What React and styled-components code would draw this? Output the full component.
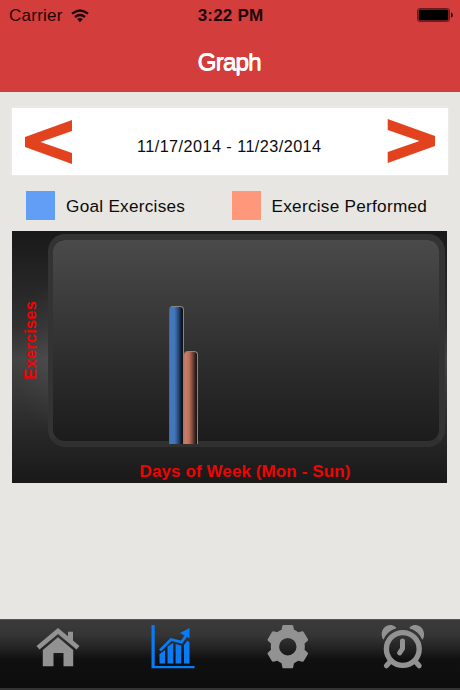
import React from "react";
import styled, { createGlobalStyle } from "styled-components";

const GlobalStyle = createGlobalStyle`
  * { box-sizing: border-box; }
  body { margin: 0; background: #e8e6e2; }
`;

const Screen = styled.div`
  display: flex;
  flex-direction: column;
  width: 460px;
  height: 690px;
  overflow: hidden;
  background: #e8e6e2;
  color: #0b0b0b;
  font-family: "Liberation Sans", Arial, sans-serif;
`;

const Header = styled.header`
  flex: none;
  height: 92px;
  background: #d33d3c;
`;

const StatusBar = styled.div`
  display: grid;
  grid-template-columns: 1fr auto 1fr;
  align-items: center;
  height: 30px;
  padding: 0 7px 0 9px;
  color: #1c0505;
  font-size: 17px;
  line-height: 20px;
`;

const Carrier = styled.div`
  display: flex;
  align-items: center;
  gap: 8px;
  padding-top: 1px;
  letter-spacing: 0.25px;
`;

const Clock = styled.div`
  padding: 1px 1px 0 0;
  font-weight: bold;
  letter-spacing: 0.2px;
`;

const BatterySlot = styled.div`
  display: flex;
  justify-content: flex-end;
`;

const Title = styled.h1`
  margin: 0;
  padding: 16px 2px 0 0;
  text-align: center;
  color: #fff;
  font-size: 24.5px;
  line-height: 31px;
  font-weight: normal;
  letter-spacing: -1px;
  text-shadow: 0.4px 0 0 #fff, 0 0.6px 0 #fff;
`;

const Content = styled.main`
  flex: 1;
  padding: 16px 12px 0;
`;

const DateCard = styled.section`
  display: flex;
  justify-content: space-between;
  height: 67px;
  padding: 12px 13px 0;
  background: #fff;
  box-shadow: 0 0 2px #f4f3f1;
`;

const ArrowButton = styled.button`
  display: block;
  width: 48px;
  height: 45px;
  margin-top: ${(p) => p.$shift}px;
  padding: 0;
  border: 0;
  background: none;
  svg { display: block; }
`;

const DateRange = styled.div`
  padding: 16px 1.5px 0 0;
  font-size: 16.2px;
  line-height: 20px;
  letter-spacing: 0.46px;
  white-space: nowrap;
`;

const Legend = styled.div`
  display: grid;
  grid-template-columns: 205.5px 1fr;
  height: 56px;
  padding: 16px 0 0 14px;
`;

const LegendItem = styled.div`
  display: flex;
  align-items: center;
  gap: 11px;
  height: 29px;
  font-size: 17.2px;
  line-height: 20px;
  letter-spacing: 0.26px;
  white-space: nowrap;
`;

const LegendText = styled.span`
  padding-top: 0.5px;
`;

const Swatch = styled.span`
  width: 29px;
  height: 29px;
  background: ${(p) => p.$color};
`;

const Chart = styled.section`
  display: grid;
  grid-template-columns: 36px 397px;
  grid-template-rows: 216px 1fr;
  width: 435px;
  height: 252px;
  background:
    radial-gradient(ellipse 30px 75px at 36px 125px, rgba(105, 105, 105, 0.2), transparent),
    linear-gradient(#191919 0, #242424 18%, #303030 38%, #434343 51%, #3a3a3a 61%, #282828 80%, #191919 100%);
  color: #ed0505;
  font-size: 17px;
  font-weight: bold;
`;

const YAxisLabel = styled.div`
  justify-self: center;
  align-self: center;
  margin: 3px 1px 0 0;
  writing-mode: vertical-rl;
  transform: rotate(180deg);
  font-size: 16.5px;
  line-height: 20px;
  letter-spacing: 0.15px;
`;

const Plot = styled.div`
  display: flex;
  align-items: flex-end;
  margin-top: 3px;
  padding-left: 116px;
  border: 6px solid #333;
  border-left-width: 5px;
  border-bottom-color: #303030;
  border-radius: 17px;
  background: linear-gradient(#4a4a4a, #3c3c3c 30%, #2c2c2c 63%, #1c1c1c) padding-box;
`;

const Bar = styled.div`
  width: ${(p) => p.$width}px;
  margin-bottom: -3px;
  border: 1px solid #858985;
  border-bottom: 0;
  border-left-color: ${(p) => p.$edge};
  border-radius: 4px 4px 0 0;
  background: ${(p) => p.$fill};
`;

const XAxisLabel = styled.div`
  grid-column: 1 / -1;
  padding: 15px 0 0 33px;
  text-align: center;
  line-height: 20px;
  letter-spacing: 0.1px;
`;

const TabBar = styled.nav`
  display: grid;
  grid-template-columns: repeat(4, 115px);
  flex: none;
  height: 71px;
  padding-top: 5px;
  border-top: 1px solid #55554f;
  border-bottom: 2px solid #333;
  background: linear-gradient(#3b3b3b 0, #353535 22%, #222 42%, #101010 58%, #0d0d0d 100%);
`;

const Tab = styled.button`
  display: flex;
  justify-content: center;
  height: 46px;
  padding: 0;
  border: 0;
  background: none;
  color: ${(p) => (p.$active ? "#087bf5" : "#929292")};
  svg { display: block; flex: none; }
`;

const WifiIcon = () => (
  <svg width="18" height="14" viewBox="0 0 18 14" fill="none" stroke="currentColor" strokeWidth="2.3">
    <path d="M1 4.7Q9-1.8 17 4.7" />
    <path d="M4 8Q9 4 14 8" />
    <path d="M6.2 10Q9 7.8 11.8 10L9 13.2Z" fill="currentColor" stroke="none" />
  </svg>
);

const BatteryIcon = () => (
  <svg width="36" height="14" viewBox="0 0 36 14">
    <rect x=".5" y=".5" width="32" height="13" rx="2" fill="none" stroke="#6b1c1b" />
    <rect x="1.6" y="1.6" width="29.8" height="10.8" rx="1" fill="#030000" />
    <path d="M34 4.5q2 .5 2 2.5t-2 2.5z" fill="#260707" />
  </svg>
);

const HomeIcon = () => (
  <svg width="46" height="46" viewBox="0 0 46 46" fill="currentColor">
    <path d="M1.5 21L23 3L33 11.3V6.7H38V15.5L44.5 21L41.5 24.5L23 9L4.5 24.5Z" />
    <path d="M7.8 25L23 12.2L38.2 25V41.2H28.5V28H18.5V41.2H7.8Z" />
  </svg>
);

const GraphIcon = () => (
  <svg width="46" height="46" viewBox="0 0 46 46" fill="currentColor">
    <path d="M1.5 0H4.7V41H44.5V43.3H1.5Z" />
    <path d="M9.5 29L15 25V38.5H9.5ZM17.5 21.5L23.2 17.7V38.5H17.5ZM25.6 19L31.2 20.5V38.5H25.6ZM34 20L37.5 15.5L39.5 17.5V38.5H34Z" />
    <path d="M10 25.5L21 14.5L31.5 17.2L37 9.5" fill="none" stroke="currentColor" strokeWidth="2.8" />
    <path d="M30 8L39.5 3V13.2Z" />
  </svg>
);

const GearIcon = () => (
  <svg width="46" height="46" viewBox="0 0 46 46" fill="currentColor">
    <path
      fillRule="evenodd"
      d="M17.4.8Q17.7 0 18.6 0H27Q27.9 0 28.2.8L29 4.8Q31.3 5.8 33.2 7.2L37.3 6.3Q38.2 6.3 38.8 7.2L43 14.2Q43.3 15.1 42.7 15.8L39.6 18.5Q40 21.5 39.6 24.8L42.8 27.7Q43.3 28.4 42.8 29.3L38.8 36.1Q38.2 37 37.2 36.8L33.2 35.8Q31.3 37.3 29 38.2L28.1 42.4Q27.9 43.3 27 43.3H18.6Q17.7 43.3 17.4 42.4L16.5 38.2Q14.3 37.3 12.3 35.8L8.4 36.8Q7.4 37 6.8 36.1L2.8 29.3Q2.3 28.4 2.8 27.7L6 24.8Q5.6 21.5 6 18.5L2.9 15.8Q2.3 15.1 2.7 14.2L6.8 7.2Q7.4 6.3 8.3 6.3L12.3 7.2Q14.3 5.8 16.6 4.8ZM22.8 13A8.7 8.7 0 1 0 22.8 30.4A8.7 8.7 0 1 0 22.8 13Z"
    />
  </svg>
);

const AlarmIcon = () => (
  <svg width="46" height="46" viewBox="0 0 46 46" fill="none" stroke="currentColor">
    <circle cx="22.8" cy="24" r="16.4" strokeWidth="5.4" />
    <path d="M22.5 16V23.5L19.7 27.8" strokeWidth="5" strokeLinecap="round" strokeLinejoin="round" />
    <path d="M11.2 35.5L6.4 40.8M34.4 35.5L39.2 40.8" strokeWidth="5" strokeLinecap="round" />
    <path
      fill="currentColor"
      stroke="none"
      d="M3 14.5C-2 5 8-4.2 15.8 2.1L16 3.5C9.5 5.6 5.8 9.2 3.8 14.3ZM42.8 14.5C47.7 5 37.7-4.2 29.8 2.1L29.7 3.5C36.2 5.6 39.8 9.2 42 14.3Z"
    />
  </svg>
);

const bars = [
  {
    label: "Goal",
    width: 14.5,
    height: 138.5,
    edge: "#416a9f",
    fill: "linear-gradient(90deg, #4379bb, #4276ba 35%, #2c5081 60%, #10192a 88%, #090b13)",
  },
  {
    label: "Performed",
    width: 14,
    height: 93,
    edge: "#ba7665",
    fill: "linear-gradient(90deg, #d17e66, #bd6f5a 35%, #79463a 62%, #281916 90%, #171515)",
  },
];

const tabs = [
  { name: "Home", Icon: HomeIcon },
  { name: "Graph", Icon: GraphIcon, active: true },
  { name: "Settings", Icon: GearIcon },
  { name: "Alarm", Icon: AlarmIcon },
];

export default function App() {
  return (
    <Screen>
      <GlobalStyle />
      <Header>
        <StatusBar>
          <Carrier>Carrier <WifiIcon /></Carrier>
          <Clock>3:22 PM</Clock>
          <BatterySlot><BatteryIcon /></BatterySlot>
        </StatusBar>
        <Title>Graph</Title>
      </Header>
      <Content>
        <DateCard>
          <ArrowButton $shift={0} aria-label="Previous week">
            <svg width="48" height="45"><path d="M47 0V11L15.5 22L47 33V44L0 27V17Z" fill="#e2431e" /></svg>
          </ArrowButton>
          <DateRange>11/17/2014 - 11/23/2014</DateRange>
          <ArrowButton $shift={-1} aria-label="Next week">
            <svg width="48" height="45"><path d="M.7 0V11L32.5 22L.7 33V44L48 27V17Z" fill="#e2431e" /></svg>
          </ArrowButton>
        </DateCard>
        <Legend>
          <LegendItem><Swatch $color="#629df6" /><LegendText>Goal Exercises</LegendText></LegendItem>
          <LegendItem><Swatch $color="#ff987a" /><LegendText>Exercise Performed</LegendText></LegendItem>
        </Legend>
        <Chart>
          <YAxisLabel>Exercises</YAxisLabel>
          <Plot>
            {bars.map((b) => (
              <Bar key={b.label} $width={b.width} $edge={b.edge} $fill={b.fill} style={{ height: b.height }} />
            ))}
          </Plot>
          <XAxisLabel>Days of Week (Mon - Sun)</XAxisLabel>
        </Chart>
      </Content>
      <TabBar>
        {tabs.map(({ name, Icon, active }) => (
          <Tab key={name} $active={active} aria-label={name}><Icon /></Tab>
        ))}
      </TabBar>
    </Screen>
  );
}
